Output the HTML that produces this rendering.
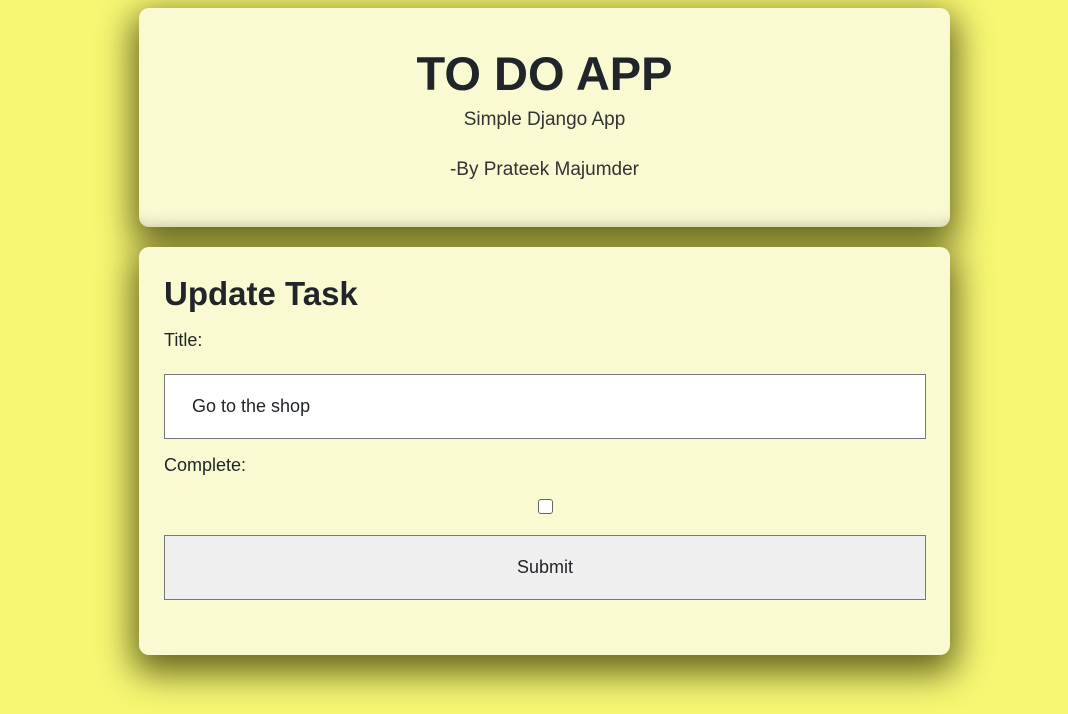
<!DOCTYPE html>
<html><head><style>
body{margin:0;background:#f7f774;font-family:"Liberation Sans",sans-serif;color:#212529;width:1068px;height:714px;overflow:hidden;position:relative}
.card{position:absolute;left:139px;width:811px;background:#fafad2;border-radius:10px;box-shadow:0 12px 35px 6px rgba(50,50,0,.75)}
.top{top:8px;height:219px;text-align:center;box-shadow:0 12px 35px 6px rgba(50,50,0,.75), inset 0 -12px 14px -10px rgba(0,0,0,.15)}
h1{margin:0;position:absolute;top:38px;width:100%;font-size:47px;font-weight:700;letter-spacing:0px}
.sub{position:absolute;width:100%;font-size:19px;color:#333}
.bot{top:247px;height:408px}
h2{position:absolute;left:25px;top:28px;margin:0;font-size:33px;font-weight:700}
.lbl{position:absolute;left:25px;font-size:18px}
.inp{position:absolute;left:25px;width:762px;height:65px;border:1px solid #777;background:#fff;box-sizing:border-box;font-size:18px;line-height:63px;padding-left:27px}
.btn{background:#efefef;text-align:center;padding:0}
.cb{position:absolute;left:399px;top:252px;width:13px;height:13px;border:1px solid #666;border-radius:3px;background:#fff}
</style></head><body>
<div class="card top">
<h1>TO DO APP</h1>
<div class="sub" style="top:101px">Simple Django App</div>
<div class="sub" style="top:151px">-By Prateek Majumder</div>
</div>
<div class="card bot">
<h2>Update Task</h2>
<div class="lbl" style="top:83px">Title:</div>
<div class="inp" style="top:127px">Go to the shop</div>
<div class="lbl" style="top:208px">Complete:</div>
<div class="cb"></div>
<div class="inp btn" style="top:288px">Submit</div>
</div>
</body></html>
